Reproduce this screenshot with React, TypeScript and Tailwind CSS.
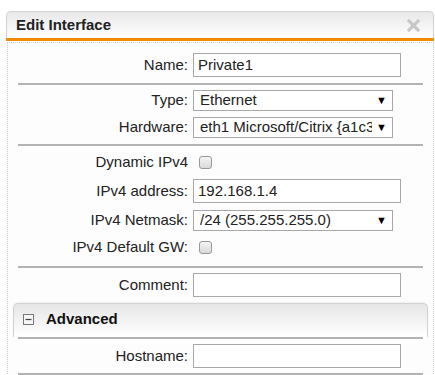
import React from "react";

const font = { fontFamily: '"Liberation Sans", Arial, sans-serif' };

function Sep() {
  return <div className="h-[2px] w-[405px] bg-[#b3b3b3]" />;
}

function Label({ children }: { children: React.ReactNode }) {
  return <div className="w-[170px] shrink-0 pr-0 text-right text-[15px] text-[#222]">{children}</div>;
}

function TextInput({ value = "", cls = "" }: { value?: string; cls?: string }) {
  return (
    <div className={`ml-[5px] flex h-[24px] w-[208px] items-center border border-[#a8a8a8] bg-white pl-[4px] text-[15px] text-[#222] ${cls}`}>
      {value}
    </div>
  );
}

function Select({ value }: { value: string }) {
  return (
    <div className="ml-[5px] flex h-[21px] w-[200px] items-center border border-[#a8a8a8] bg-white pl-[6px] pr-[5px] text-[15px] text-[#222]">
      <span className="flex-1 overflow-hidden whitespace-nowrap">{value}</span>
      <span className="ml-[4px] text-[11px] leading-none text-black">▼</span>
    </div>
  );
}

function Check() {
  return (
    <div className="ml-[6px] h-[13px] w-[13px] rounded-[3px] border border-[#999] bg-gradient-to-b from-[#f4f4f4] to-[#d9d9d9]" />
  );
}

function Row({ label, children, h, mt }: { label: string; children: React.ReactNode; h: string; mt: string }) {
  return (
    <div className={`flex items-center ${h} ${mt}`}>
      <Label>{label}</Label>
      {children}
    </div>
  );
}

export default function App() {
  return (
    <div className="h-[375px] w-[435px] overflow-hidden bg-white pl-[6px] pt-[11px]" style={font}>
      <div className="w-[428px]">
        <div className="flex h-[27px] items-center justify-between rounded-t-[5px] border border-b-0 border-[#d2d2d2] bg-gradient-to-b from-[#e8e8e8] to-white pl-[9px] pr-[13px]">
          <span className="text-[15px] font-bold text-[#222]">Edit Interface</span>
          <svg width="13" height="13" viewBox="0 0 13 13" className="mt-[1px]">
            <path d="M2 2 L11 11 M11 2 L2 11" stroke="#c8c8c8" strokeWidth="3.2" strokeLinecap="square" />
          </svg>
        </div>
        <div className="h-[3px] bg-[#f28a00]" />
        <div className="ml-[1px] mt-[1px] h-[400px] w-[427px] border border-b-0 border-dotted border-[#cfcfcf] bg-[#fdfdfd] pl-[10px]">
          <Row label="Name:" h="h-[24px]" mt="mt-[10px]">
            <TextInput value="Private1" />
          </Row>
          <div className="mt-[6px]"><Sep /></div>

          <Row label="Type:" h="h-[21px]" mt="mt-[5px]">
            <Select value="Ethernet" />
          </Row>
          <Row label="Hardware:" h="h-[21px]" mt="mt-[6px]">
            <Select value="eth1 Microsoft/Citrix {a1c3" />
          </Row>
          <div className="mt-[6px]"><Sep /></div>

          <Row label="Dynamic IPv4" h="h-[24px]" mt="mt-[4px]">
            <div className="ml-[5px]"><Check /></div>
          </Row>
          <Row label="IPv4 address:" h="h-[24px]" mt="mt-[5px]">
            <TextInput value="192.168.1.4" />
          </Row>
          <Row label="IPv4 Netmask:" h="h-[21px]" mt="mt-[7px]">
            <Select value="/24 (255.255.255.0)" />
          </Row>
          <Row label="IPv4 Default GW:" h="h-[24px]" mt="mt-[4px]">
            <div className="ml-[5px]"><Check /></div>
          </Row>
          <div className="mt-[7px]"><Sep /></div>

          <Row label="Comment:" h="h-[24px]" mt="mt-[5px]">
            <TextInput />
          </Row>

          <div className="-ml-[5px] mt-[6px] flex h-[34px] w-[415px] items-center rounded-t-[5px] border border-b-0 border-[#d2d2d2] bg-gradient-to-b from-[#e6e6e6] to-white pb-[3px] pl-[9px] shadow-[0_-1px_2px_rgba(0,0,0,0.06)]">
            <svg width="11" height="11" viewBox="0 0 11 11">
              <rect x="0.5" y="0.5" width="10" height="10" fill="#f6f6f6" stroke="#777" />
              <path d="M2.5 5.5 H8.5" stroke="#444" strokeWidth="1.2" />
            </svg>
            <span className="ml-[12px] text-[15px] font-bold text-[#111]">Advanced</span>
          </div>
          <Sep />

          <Row label="Hostname:" h="h-[24px]" mt="mt-[5px]">
            <TextInput />
          </Row>
          <div className="mt-[5px]"><Sep /></div>
        </div>
      </div>
    </div>
  );
}
